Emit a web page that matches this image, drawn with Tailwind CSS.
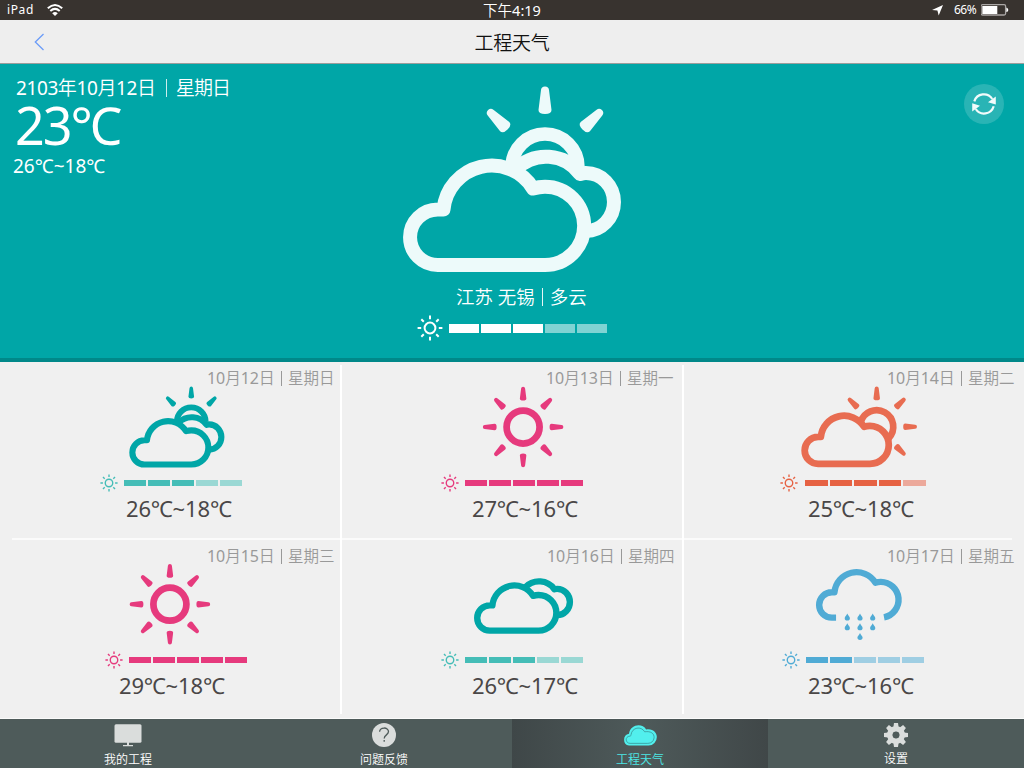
<!DOCTYPE html>
<html lang="zh-CN">
<head>
<meta charset="utf-8">
<title>工程天气</title>
<script src="https://cdn.jsdelivr.net/npm/@tailwindcss/browser@4"></script>
</head>
<body class="w-[1024px] h-[768px] overflow-hidden flex flex-col bg-[#f0f0f0] font-['Noto_Sans','Noto_Sans_CJK_SC_DemiLight','Noto_Sans_CJK_SC',sans-serif] whitespace-nowrap">

<!-- Shared icon shapes -->
<svg class="hidden">
  <defs>
    <path id="ray" d="M151 20Q151.3 16.5 155 16.5T159 20L161.5 40Q161.5 44 155 44T148.5 40Z" fill="currentColor"/>
    <path id="cloud" d="M47.8 195A27.75 27.75 0 0 1 47.8 139.5H53.5A48.5 48.5 0 0 1 143 118.5Q149 116.7 155 116.7A39.15 39.15 0 0 1 155 195Z" fill="none" stroke="currentColor" stroke-width="14" stroke-linejoin="round"/>
    <path id="back" d="M126 99.3A42 42 0 0 1 190 104Q193 103 196 103A28 29 0 0 1 196 161" fill="none" stroke="currentColor" stroke-width="14" stroke-linejoin="round"/>
    <g id="clouds"><use href="#back"/><use href="#cloud"/></g>
    <g id="partly">
      <use href="#ray"/><use href="#ray" transform="rotate(-45 155 97)"/><use href="#ray" transform="rotate(45 155 97)"/>
      <path d="M122 97A33 33 0 0 1 188 97" fill="none" stroke="currentColor" stroke-width="13.5"/>
      <use href="#clouds"/>
    </g>
    <g id="sunny">
      <circle cx="155" cy="97" r="33" fill="none" stroke="currentColor" stroke-width="13.5"/>
      <use href="#ray"/><use href="#ray" transform="rotate(45 155 97)"/><use href="#ray" transform="rotate(90 155 97)"/><use href="#ray" transform="rotate(135 155 97)"/>
      <use href="#ray" transform="rotate(180 155 97)"/><use href="#ray" transform="rotate(225 155 97)"/><use href="#ray" transform="rotate(270 155 97)"/><use href="#ray" transform="rotate(315 155 97)"/>
    </g>
    <path id="drop" d="M0 0C.6 2 2.6 3 2.6 4.7A2.6 2.4 0 0 1-2.6 4.7C-2.6 3-.6 2 0 0Z" fill="currentColor"/>
    <symbol id="mini" viewBox="-13 -13 26 26">
      <g fill="none" stroke="currentColor" stroke-width="2">
        <circle r="5.4"/>
        <path d="M0-12.4V-8.8M0 12.4V8.8M-12.4 0H-8.8M12.4 0H8.8M-8.7-8.7-6.2-6.2M8.7 8.7 6.2 6.2M-8.7 8.7-6.2 6.2M8.7-8.7 6.2-6.2"/>
      </g>
    </symbol>
  </defs>
</svg>

<!-- Status bar -->
<div class="h-5 shrink-0 bg-[#38332f] text-white text-[12px] leading-5 grid grid-cols-3 items-center">
  <div class="flex items-center pl-[7px]">
    <span class="tracking-[0.6px] w-10">iPad</span>
    <svg class="w-4 h-3" viewBox="0 0 16 12" fill="none" stroke="#fff" stroke-width="2"><path d="M.8 4.3Q8-2.2 15.2 4.3M3.3 7Q8 2.8 12.7 7"/><path d="M5.2 9.2Q8 6.8 10.8 9.2L8 12Z" fill="#fff" stroke="none"/></svg>
  </div>
  <div class="text-center text-[14.5px]">下午4:19</div>
  <div class="flex items-center justify-end pr-[15px]">
    <svg class="w-[11px] h-[11px] mr-[11px]" viewBox="0 0 11 11"><path d="M11 0 6.7 10.5 5.4 5.6 0 5Z" fill="#fff"/></svg>
    <span class="w-[27px] text-[12px] tracking-[-0.5px]">66%</span>
    <svg class="w-7 h-3" viewBox=".7 0 28 12"><rect x=".7" y=".7" width="24.6" height="10.3" rx="1.5" fill="none" stroke="#aaa7a5" stroke-width="1.3"/><path d="M2 2H17V10H2Z" fill="#fff"/><path d="M26 3.5Q28 4 28 6T26 8Z" fill="#fff"/></svg>
  </div>
</div>

<!-- Title bar -->
<header class="h-11 shrink-0 bg-[#eeeeee] border-b border-[#9a9d9c] grid grid-cols-3 items-center">
  <svg class="ml-[34px] w-[11px] h-[18px]" viewBox="0 0 11 18" fill="none" stroke="#6b9cf8" stroke-width="1.3"><path d="M9.5 1 1.3 9 9.5 17"/></svg>
  <h1 class="text-center text-[19px] tracking-[-0.3px] text-[#111] pt-[3px]">工程天气</h1>
</header>

<!-- Current weather -->
<section class="h-[298px] shrink-0 bg-[#00a6a7] border-b-4 border-[#008889] text-white grid grid-cols-[390px_244px_390px]">
  <div class="pl-[16px] pt-[12px]">
    <div class="flex items-center h-6 text-[19px] leading-6">
      <span class="w-[150px] tracking-[-0.4px]">2103年10月12日</span>
      <span class="w-px h-[18px] bg-white/80 mr-[9px]"></span>
      <span class="tracking-[-1px]">星期日</span>
    </div>
    <div class="-ml-[1px] -mt-[2px] text-[52px] leading-[54px] tracking-[-2px]">23℃</div>
    <div class="-ml-[3px] mt-[2px] text-[19px] leading-[24px]">26℃~18℃</div>
  </div>
  <div class="flex flex-col">
    <svg class="w-[244px] h-[216px]" viewBox="0 -6 244 216" color="#edfafa"><use href="#partly"/></svg>
    <div class="flex items-center h-9 text-[18.5px] -mt-px ml-[66px]">
      <span>江苏 无锡</span><span class="w-px h-[18px] bg-white/90 mx-[7px]"></span><span>多云</span>
    </div>
    <div class="flex items-center h-[26px] ml-[27px]">
      <svg class="w-[26px] h-[26px] mr-[6px]"><use href="#mini"/></svg>
      <div class="flex gap-[2px] [&>i]:w-[30px] [&>i]:h-[9px]"><i class="bg-white"></i><i class="bg-white"></i><i class="bg-white"></i><i class="bg-white/50"></i><i class="bg-white/50"></i></div>
    </div>
  </div>
  <div class="flex justify-end pr-5 pt-5">
    <button class="w-10 h-10 rounded-full bg-white/16 flex items-center justify-center">
      <svg class="w-6 h-6" viewBox="0 0 24 24"><g fill="none" stroke="#f2fbfb" stroke-width="2.2"><path d="M2.3 9.3A10 10 0 0 1 20.3 7"/><path d="M21.7 14.3A10 10 0 0 1 3.7 17"/></g><path d="M23.8 4.6V12.5L16 10.2ZM.2 19.4V11.2L8 13.8Z" fill="#f2fbfb"/></svg>
    </button>
  </div>
</section>

<!-- Forecast -->
<main class="h-[357px] shrink-0 grid grid-rows-[177px_180px] border-b border-[#fbfbfb] text-[#4a4747]">
  <div class="grid grid-cols-[341px_342px_341px]">
    <article class="flex flex-col">
      <div class="flex items-center pt-2 h-6 leading-4 text-[16px] text-[#999] ml-[207px]"><span class="w-[74px] tracking-[-0.15px]">10月12日</span><span class="w-px h-[15px] bg-[#999] mr-[6px]"></span><span class="text-[15.5px]">星期日</span></div>
      <svg class="w-full h-[84px] text-[#00a6a7]" viewBox="0 386 341 84"><use href="#partly" transform="translate(123.6 379.4) scale(.4365)"/></svg>
      <div class="flex items-center h-[26px] ml-[100px]"><svg class="w-[18px] h-[18px] mr-[6px] text-[#45bdb7]"><use href="#mini"/></svg><div class="flex gap-[2px] [&>i]:w-[22px] [&>i]:h-[6px]"><i class="bg-[#45bdb7]"></i><i class="bg-[#45bdb7]"></i><i class="bg-[#45bdb7]"></i><i class="bg-[#9ad8d4]"></i><i class="bg-[#9ad8d4]"></i></div></div>
      <div class="ml-[126px] -mt-px text-[22px] leading-[26px] tracking-[-0.15px]">26℃~18℃</div>
    </article>
    <article class="flex flex-col">
      <div class="flex items-center pt-2 h-6 leading-4 text-[16px] text-[#999] ml-[205px]"><span class="w-[74px] tracking-[-0.15px]">10月13日</span><span class="w-px h-[15px] bg-[#999] mr-[6px]"></span><span class="text-[15.5px]">星期一</span></div>
      <svg class="w-full h-[84px] text-[#e63a7d]" viewBox="341 386 342 84"><use href="#sunny" transform="translate(445.6 378.5) scale(.5)"/></svg>
      <div class="flex items-center h-[26px] ml-[100px]"><svg class="w-[18px] h-[18px] mr-[6px] text-[#e63a7d]"><use href="#mini"/></svg><div class="flex gap-[2px] [&>i]:w-[22px] [&>i]:h-[6px]"><i class="bg-[#e63a7d]"></i><i class="bg-[#e63a7d]"></i><i class="bg-[#e63a7d]"></i><i class="bg-[#e63a7d]"></i><i class="bg-[#e63a7d]"></i></div></div>
      <div class="ml-[131px] -mt-px text-[22px] leading-[26px] tracking-[-0.15px]">27℃~16℃</div>
    </article>
    <article class="flex flex-col">
      <div class="flex items-center pt-2 h-6 leading-4 text-[16px] text-[#999] ml-[204px]"><span class="w-[74px] tracking-[-0.15px]">10月14日</span><span class="w-px h-[15px] bg-[#999] mr-[6px]"></span><span class="text-[15.5px]">星期二</span></div>
      <svg class="w-full h-[84px] text-[#e86c51]" viewBox="683 386 341 84">
        <g transform="translate(799.2 378.2) scale(.5)"><use href="#ray"/><use href="#ray" transform="rotate(-45 155 97)"/><use href="#ray" transform="rotate(45 155 97)"/><use href="#ray" transform="rotate(90 155 97)"/><use href="#ray" transform="rotate(135 155 97)"/></g>
        <path d="M860.7 422.2A16.6 16.6 0 1 1 888.7 438.2" fill="none" stroke="currentColor" stroke-width="6.7"/>
        <use href="#cloud" transform="translate(795 369.6) scale(.483)"/>
      </svg>
      <div class="flex items-center h-[26px] ml-[97px]"><svg class="w-[18px] h-[18px] mr-[7px] text-[#e66243]"><use href="#mini"/></svg><div class="flex gap-[2px] [&>i]:w-[22.6px] [&>i]:h-[6px]"><i class="bg-[#e66243]"></i><i class="bg-[#e66243]"></i><i class="bg-[#e66243]"></i><i class="bg-[#e66243]"></i><i class="bg-[#eca99b]"></i></div></div>
      <div class="ml-[125px] -mt-px text-[22px] leading-[26px] tracking-[-0.15px]">25℃~18℃</div>
    </article>
  </div>

  <div class="relative grid grid-cols-[341px_342px_341px]">
    <!-- Rules between the cells -->
    <i class="absolute left-3 -top-px w-[1000px] h-[2px] bg-[#fbfbfb]"></i>
    <i class="absolute left-[340px] -top-[174px] w-[2px] h-[349px] bg-white"></i>
    <i class="absolute left-[682px] -top-[174px] w-[2px] h-[349px] bg-white"></i>
    <article class="flex flex-col">
      <div class="flex items-center pt-[10px] h-6 leading-4 text-[16px] text-[#999] ml-[207px]"><span class="w-[74px] tracking-[-0.15px]">10月15日</span><span class="w-px h-[15px] bg-[#999] mr-[6px]"></span><span class="text-[15.5px]">星期三</span></div>
      <svg class="w-full h-[84px] text-[#e63a7d]" viewBox="0 563 341 84"><use href="#sunny" transform="translate(92.4 555.7) scale(.5)"/></svg>
      <div class="flex items-center h-[26px] ml-[105px]"><svg class="w-[18px] h-[18px] mr-[6px] text-[#e63a7d]"><use href="#mini"/></svg><div class="flex gap-[2px] [&>i]:w-[22px] [&>i]:h-[6px]"><i class="bg-[#e63a7d]"></i><i class="bg-[#e63a7d]"></i><i class="bg-[#e63a7d]"></i><i class="bg-[#e63a7d]"></i><i class="bg-[#e63a7d]"></i></div></div>
      <div class="ml-[119px] -mt-px text-[22px] leading-[26px] tracking-[-0.15px]">29℃~18℃</div>
    </article>
    <article class="flex flex-col">
      <div class="flex items-center pt-[10px] h-6 leading-4 text-[16px] text-[#999] ml-[206px]"><span class="w-[74px] tracking-[-0.15px]">10月16日</span><span class="w-px h-[15px] bg-[#999] mr-[6px]"></span><span class="text-[15.5px]">星期四</span></div>
      <svg class="w-full h-[84px] text-[#00a6a7]" viewBox="341 563 342 84"><use href="#clouds" transform="translate(468.1 542) scale(.4545)"/></svg>
      <div class="flex items-center h-[26px] ml-[100px]"><svg class="w-[18px] h-[18px] mr-[6px] text-[#45bdb7]"><use href="#mini"/></svg><div class="flex gap-[2px] [&>i]:w-[22px] [&>i]:h-[6px]"><i class="bg-[#45bdb7]"></i><i class="bg-[#45bdb7]"></i><i class="bg-[#45bdb7]"></i><i class="bg-[#9ad8d4]"></i><i class="bg-[#9ad8d4]"></i></div></div>
      <div class="ml-[131px] -mt-px text-[22px] leading-[26px] tracking-[-0.15px]">26℃~17℃</div>
    </article>
    <article class="flex flex-col">
      <div class="flex items-center pt-[10px] h-6 leading-4 text-[16px] text-[#999] ml-[204px]"><span class="w-[74px] tracking-[-0.15px]">10月17日</span><span class="w-px h-[15px] bg-[#999] mr-[6px]"></span><span class="text-[15.5px]">星期五</span></div>
      <svg class="w-full h-[84px] text-[#50abd5]" viewBox="683 563 341 84">
        <path transform="translate(810 528.5) scale(.457)" d="M57 195H47.8A27.75 27.75 0 0 1 47.8 139.5H53.5A48.5 48.5 0 0 1 143 118.5Q149 116.7 155 116.7A39.15 39.15 0 0 1 162 194.3" fill="none" stroke="currentColor" stroke-width="14" stroke-linejoin="round"/>
        <use href="#drop" x="847.3" y="613.5"/><use href="#drop" x="860" y="613.5"/><use href="#drop" x="872.7" y="613.5"/>
        <use href="#drop" x="847.3" y="623.2"/><use href="#drop" x="860" y="623.2"/><use href="#drop" x="872.7" y="623.2"/>
        <use href="#drop" x="860" y="632.9"/>
      </svg>
      <div class="flex items-center h-[26px] ml-[99px]"><svg class="w-[18px] h-[18px] mr-[6px] text-[#50abd5]"><use href="#mini"/></svg><div class="flex gap-[2px] [&>i]:w-[22px] [&>i]:h-[6px]"><i class="bg-[#50abd5]"></i><i class="bg-[#50abd5]"></i><i class="bg-[#9fcee3]"></i><i class="bg-[#9fcee3]"></i><i class="bg-[#9fcee3]"></i></div></div>
      <div class="ml-[125px] -mt-px text-[22px] leading-[26px] tracking-[-0.15px]">23℃~16℃</div>
    </article>
  </div>
</main>

<!-- Tabs -->
<nav class="h-[49px] shrink-0 grid grid-cols-4 bg-[#4e5b5a] text-white text-[12px] leading-4 text-center">
  <a class="flex flex-col items-center pt-1">
    <svg class="w-7 h-7" viewBox="0 0 28 28" fill="#dadddc"><rect x=".5" y="1.3" width="27" height="18.5" rx="1.5"/><path d="M13 19H15V22H19V23.2H9V22H13Z"/></svg>
    <span class="mt-px">我的工程</span>
  </a>
  <a class="flex flex-col items-center pt-1">
    <svg class="w-6 h-7" viewBox="0 0 24 28"><circle cx="12" cy="12" r="12" fill="#dadddc"/><path d="M7.6 8.8C7.8 3.8 16.5 3.8 16.5 8.6 16.5 12 12.2 11.8 12.2 15.5M12.2 17V18.8" fill="none" stroke="#4e5b5a" stroke-width="1.3"/></svg>
    <span class="mt-px">问题反馈</span>
  </a>
  <a class="flex flex-col items-center pt-1 text-[#4ce8e6] bg-linear-to-r from-[#3f4748] via-[#4e5a5a] to-[#404748]">
    <svg class="w-9 h-7" viewBox="1.4 .2 34 26.4"><path d="M8 21.5A5.7 5.7 0 0 1 8 10.3C9.2 1.2 20.5-.2 24.2 6.2 31 5.2 34.3 9.5 34.3 13.3A8 8.2 0 0 1 26.5 21.5Z" fill="#52efed"/><path d="M9 19.4C4.7 19.4 3.6 13 9 12.5 9.7 12.4 9.8 12.2 9.9 11.3 10.8 4.2 19.6 2.7 22.8 8.5 28.5 7.6 32 10 31.7 14.2 31.4 17.4 29 19.4 25.8 19.4Z" fill="none" stroke="#39999b" stroke-width=".8"/></svg>
    <span class="mt-px">工程天气</span>
  </a>
  <a class="flex flex-col items-center pt-1">
    <svg class="w-6 h-7" viewBox="-12 -12 24 28"><g fill="#dadddc"><path id="t" d="M-2.6-8 -2-12H2L2.6-8V8L2 12H-2L-2.6 8Z M-8-2.6-12-2V2L-8 2.6H8L12 2V-2L8-2.6Z" mask="url(#hole)"/><use href="#t" transform="rotate(45)"/><circle r="6.4" fill="none" stroke="#dadddc" stroke-width="5.2"/></g><mask id="hole" maskUnits="userSpaceOnUse" x="-13" y="-13" width="26" height="26"><path d="M-13-13H13V13H-13Z" fill="#fff"/><circle r="3.8" fill="#000"/></mask></svg>
    <span>设置</span>
  </a>
</nav>
</body>
</html>
